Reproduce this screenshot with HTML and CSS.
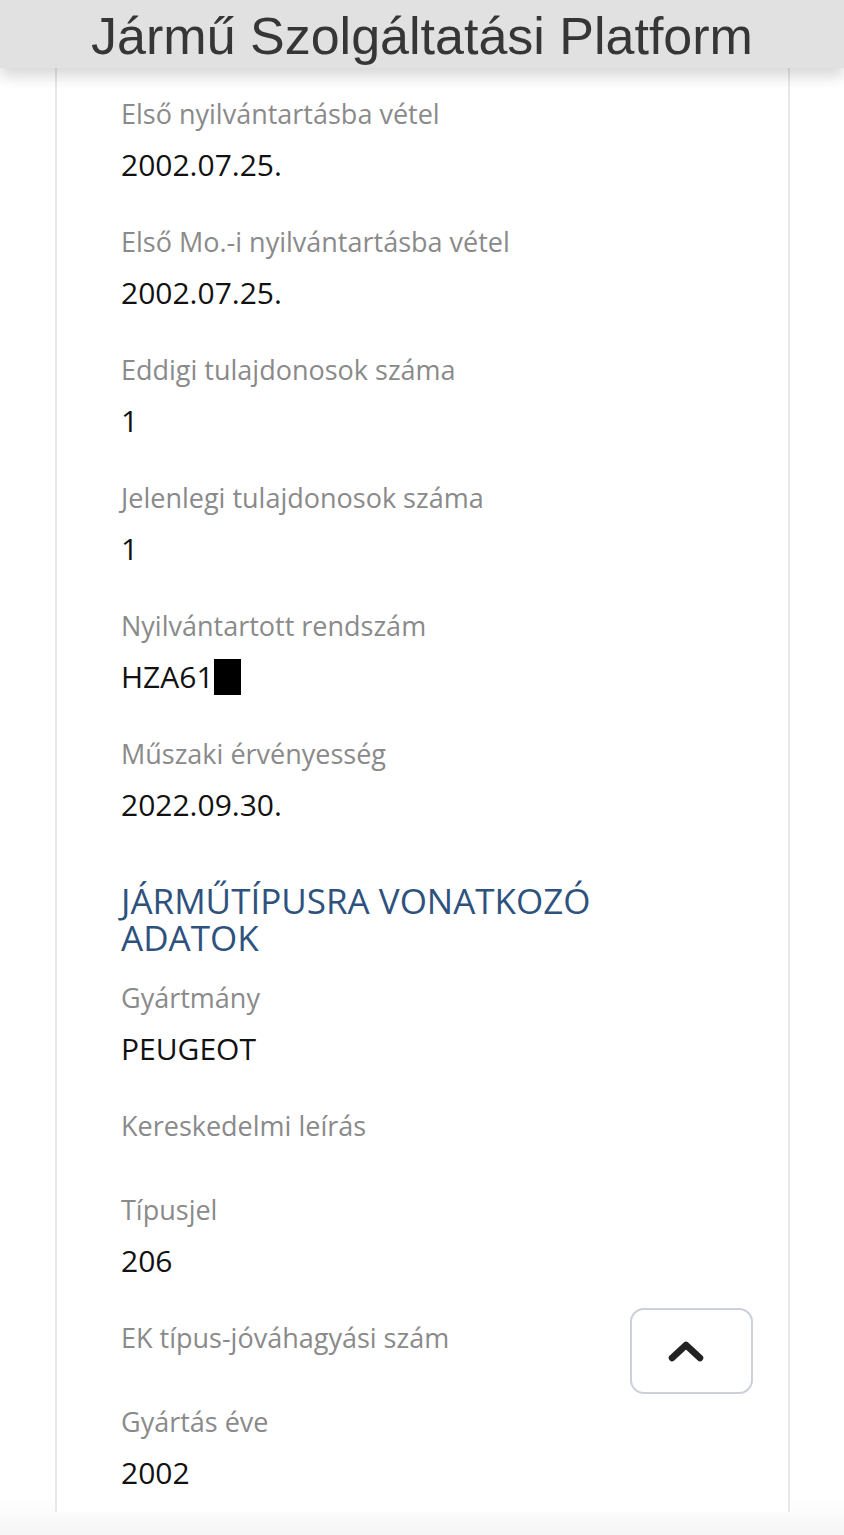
FILE: index.html
```html
<!DOCTYPE html>
<html lang="hu">
<head>
    <meta charset="utf-8">
    <title>Jármű Szolgáltatási Platform</title>
    <link rel="stylesheet" href="styles.css">
</head>
<body>
    <div class="topbar">
        <h1 class="topbar-title">Jármű Szolgáltatási Platform</h1>
    </div>

    <div class="page">
        <div class="card">

            <div class="field">
                <div class="field-label">Első nyilvántartásba vétel</div>
                <div class="field-value">2002.07.25.</div>
            </div>
            <div class="field">
                <div class="field-label">Első Mo.-i nyilvántartásba vétel</div>
                <div class="field-value">2002.07.25.</div>
            </div>
            <div class="field">
                <div class="field-label">Eddigi tulajdonosok száma</div>
                <div class="field-value">1</div>
            </div>
            <div class="field">
                <div class="field-label">Jelenlegi tulajdonosok száma</div>
                <div class="field-value">1</div>
            </div>
            <div class="field">
                <div class="field-label">Nyilvántartott rendszám</div>
                <div class="field-value">HZA61<span class="redacted"></span></div>
            </div>
            <div class="field">
                <div class="field-label">Műszaki érvényesség</div>
                <div class="field-value">2022.09.30.</div>
            </div>

            <h2 class="section-title">Járműtípusra vonatkozó adatok</h2>

            <div class="field">
                <div class="field-label">Gyártmány</div>
                <div class="field-value">PEUGEOT</div>
            </div>
            <div class="field">
                <div class="field-label">Kereskedelmi leírás</div>
                <div class="field-value"></div>
            </div>
            <div class="field">
                <div class="field-label">Típusjel</div>
                <div class="field-value">206</div>
            </div>
            <div class="field">
                <div class="field-label">EK típus-jóváhagyási szám</div>
                <div class="field-value"></div>
            </div>
            <div class="field">
                <div class="field-label">Gyártás éve</div>
                <div class="field-value">2002</div>
            </div>

        </div>
    </div>

    <button class="to-top" type="button" title="Vissza a tetejére">
        <svg width="38" height="24" viewBox="0 0 38 24">
            <path d="M5 19 L19 6 L33 19" fill="none" stroke="#222" stroke-width="6.5" stroke-linecap="round" stroke-linejoin="round"/>
        </svg>
    </button>
</body>
</html>
```

FILE: styles.css
```css
html, body {
    margin: 0;
    padding: 0;
    background: #ffffff;
}

body {
    font-family: "Open Sans", "Noto Sans", sans-serif;
    min-height: 1535px;
    position: relative;
}

.topbar {
    position: relative;
    z-index: 2;
    height: 68px;
    background: #e1e1e1;
    box-shadow: 0 8px 14px rgba(0, 0, 0, 0.16);
    display: flex;
    align-items: center;
    justify-content: center;
}

.topbar-title {
    margin: 3px 0 0 0;
    font-family: "Liberation Sans", Arial, sans-serif;
    font-weight: normal;
    font-size: 52px;
    color: #363636;
    line-height: 1;
}

.page {
    padding: 0 54px 0 55px;
    height: 1467px;
    background: linear-gradient(to bottom, #ffffff 1430px, #f5f5f5 1467px);
}

.card {
    height: 1416px;
    border-left: 2px solid #e8e8e8;
    border-right: 2px solid #e8e8e8;
    background: #ffffff;
    padding: 28px 0 0 64px;
}

.field {
    display: flex;
    flex-direction: column;
    margin-bottom: 38px;
}

.field-label {
    font-size: 27px;
    line-height: 36px;
    color: #8a8a8a;
    margin-bottom: 12px;
}

.field-value {
    font-size: 30px;
    line-height: 42px;
    color: #111111;
}

.field-value:empty {
    height: 0;
    margin-top: -2px;
}

.redacted {
    display: inline-block;
    width: 27px;
    height: 36px;
    background: #000000;
    vertical-align: -7px;
}

.section-title {
    margin: 56px 0 24px;
    max-width: 540px;
    font-size: 35px;
    font-weight: normal;
    line-height: 37px;
    text-transform: uppercase;
    color: #2e527e;
}

.to-top {
    position: absolute;
    left: 630px;
    top: 1308px;
    width: 123px;
    height: 86px;
    background: #ffffff;
    border: 2px solid #cbd0da;
    border-radius: 14px;
    display: flex;
    align-items: center;
    justify-content: center;
    padding: 0 12px 0 0;
}
```
